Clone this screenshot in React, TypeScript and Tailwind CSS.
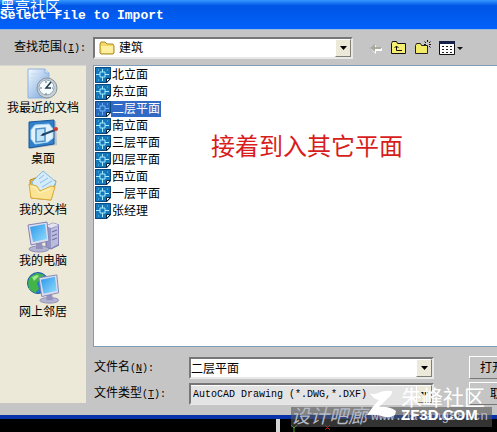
import { useState } from "react";
import type { ReactNode } from "react";

const files = [
  "北立面",
  "东立面",
  "二层平面",
  "南立面",
  "三层平面",
  "四层平面",
  "西立面",
  "一层平面",
  "张经理",
];

function RecentIcon() {
  return (
    <svg width="32" height="32" viewBox="0 0 32 32">
      <defs>
        <linearGradient id="paper" x1="0" y1="0" x2="1" y2="1">
          <stop offset="0" stopColor="#f6fbff" />
          <stop offset="1" stopColor="#6fa0dc" />
        </linearGradient>
      </defs>
      <path d="M1 1h17l4 4v25H1z" fill="url(#paper)" stroke="#8fb2dd" />
      <path d="M18 1v4h4" fill="#dcecfb" stroke="#8fb2dd" />
      <path d="M4 6h11M4 10h7M4 14h4" stroke="#c3d8f0" />
      <circle cx="20" cy="20" r="10" fill="#c9d0d7" stroke="#8794a0" />
      <circle cx="19.500" cy="19.500" r="7.500" fill="#f2fafb" stroke="#91a4b3" />
      <path d="M24 14l-5 6h5" fill="none" stroke="#26394d" strokeWidth="1.500" />
      <path d="M19 13v2M19 25v2M13 20h2M25 20h1" stroke="#5f7080" />
    </svg>
  );
}

function DesktopIcon() {
  return (
    <svg width="32" height="32" viewBox="0 0 32 32">
      <path d="M3 4l26-2 1 24-27 4z" fill="#b9c2cc" />
      <path d="M2 3l25-2v24L2 29z" fill="#2f7fca" stroke="#1a5798" />
      <path d="M8 6l14-1 4 5v9l-5 4-13 2-4-5V11z" fill="#e3f3fd" stroke="#a7d6f3" />
      <path d="M9 10l9-1v13l-9 1z" fill="#c3e3f6" stroke="#4d93ca" strokeWidth="1.500" />
      <path d="M15 16l13-5" stroke="#214b73" strokeWidth="2" />
      <path d="M13 17l4-3 1 2z" fill="#17334f" />
      <circle cx="29" cy="10" r="2" fill="#d8392a" />
    </svg>
  );
}

function DocumentsIcon() {
  return (
    <svg width="32" height="32" viewBox="0 0 32 32">
      <path d="M3 10l8-3 18 4-5 19-20-2z" fill="#e7b83e" stroke="#bd8a20" />
      <path d="M5 12L16 1l13 11-8 14-13-3z" fill="#d3ebfa" stroke="#85b8dc" />
      <path d="M12 9l5-4M13 13l8-5M15 17l10-6" stroke="#8dbee0" />
      <path d="M2 14l8 2 3 5 11-5 4 1-4 13-20-2z" fill="#fbe594" stroke="#d9ac3f" />
      <path d="M5 16l4 2 3 5 11-4" fill="none" stroke="#fff6c8" />
    </svg>
  );
}

function ScreenShape() {
  return (
    <>
      <ellipse cx="12" cy="28" rx="10" ry="3" fill="#b4b4d2" stroke="#8d8eb8" />
      <path d="M9 22h6l1 6H9z" fill="#9292bd" />
      <path d="M1 4l19-3 2 19-18 4z" fill="#dcdcee" stroke="#8384b3" />
      <path d="M3 6l15-3 2 15-14 3z" fill="url(#screen)" />
    </>
  );
}

function ComputerIcon() {
  return (
    <svg width="32" height="32" viewBox="0 0 32 32">
      <defs>
        <linearGradient id="screen" x1="0" y1="0" x2="1" y2="1">
          <stop offset="0" stopColor="#2b97eb" />
          <stop offset="1" stopColor="#93ddfb" />
        </linearGradient>
      </defs>
      <path d="M19 5l7-3 6 2v20l-8 4-5-2z" fill="#9495c2" stroke="#7475aa" />
      <path d="M19 5l5 2 8-3-6-2z" fill="#e3e3f2" />
      <path d="M24 8l7-3v18l-7 4z" fill="#bcbcdc" />
      <path d="M25 11l5-2M25 15l5-2M25 19l5-2" stroke="#6868a1" />
      <ScreenShape />
    </svg>
  );
}

function NetworkIcon() {
  return (
    <svg width="32" height="32" viewBox="0 0 32 32">
      <circle cx="11" cy="11" r="10.500" fill="#2a78d0" stroke="#205b9d" />
      <path d="M3 5l7-4 7 2-4 5-3 3 2 6-4 4-6-4-1-7z" fill="#43b548" />
      <path d="M5 5l5-2 2 1-5 5z" fill="#a4e88b" />
      <g transform="translate(11 2) scale(0.940)">
        <ScreenShape />
      </g>
    </svg>
  );
}

function DrawingIcon({ active }: { active: boolean }) {
  return (
    <svg className="shrink-0" width="16" height="16" viewBox="0 0 16 16">
      <path d="M0 0h16v12l-4 4H0z" fill={active ? "#2468c0" : "#1377ba"} />
      <path d="M.5.5h15v11l-4 4H.5z" fill="none" stroke="#0a4a80" />
      <path
        d="M1 7.500h4M10 7.500h4M7.500 2v3M7.500 10v4M5 5h5v5H5z"
        fill="none"
        stroke={active ? "#6fb4ee" : "#a6edff"}
      />
      <path d="M3 3h1M12 3h1M3 13h1" stroke="#71c9ef" />
      <path d="M11.500 15.500v-4h4z" fill="#fff" stroke="#10223a" />
    </svg>
  );
}

function FolderIcon() {
  return (
    <svg width="16" height="14" viewBox="0 0 16 14">
      <path d="M1 3l1-2h4l2 2h6l1 2v7l-1 1H2l-1-1z" fill="#f6d865" stroke="#a98928" />
      <path d="M2 5h12v6l-1 1H3z" fill="#fff0a0" />
    </svg>
  );
}

function BackIcon() {
  return (
    <svg width="14" height="12" viewBox="0 0 14 12">
      <path d="M2 7l5-4v3h6v3H7v3z" fill="#fff" />
      <path d="M1 6l5-4v3h6v2H6v3z" fill="#aaa99f" />
    </svg>
  );
}

function UpIcon() {
  return (
    <svg width="16" height="14" viewBox="0 0 16 14">
      <path d="M.5 12.500v-10l1-2h4l1 2h8v10z" fill="#f5ee70" stroke="#111" />
      <path d="M5.500 5v4.500H11M3.500 7L5.500 5l2 2" fill="none" stroke="#111" />
    </svg>
  );
}

function NewFolderIcon() {
  return (
    <svg width="16" height="15" viewBox="0 0 16 15">
      <path d="M.5 13.500v-8l1-2h4l1 2h6v8z" fill="#f2eb68" stroke="#222" />
      <path
        d="M12.500 0v2M12.500 6v2M9 4.500h2M14 4.500h2M9.500 1.500l1.500 1.500M15.500 1.500L14 3M15.500 7.500L14 6"
        stroke="#111"
      />
    </svg>
  );
}

function ViewIcon() {
  return (
    <svg width="24" height="14" viewBox="0 0 24 14">
      <path d="M.5.5h15v13H.5z" fill="#fff" stroke="#111" />
      <path d="M0 1.500h16" stroke="#15204d" strokeWidth="3" />
      <path
        d="M3 5.500h2M7 5.500h2M11 5.500h2M3 8.500h2M7 8.500h2M11 8.500h2M3 11.500h2M7 11.500h2M11 11.500h2"
        stroke="#222"
      />
      <path d="M18 6h6l-3 3z" fill="#111" />
    </svg>
  );
}

const places = [
  { label: "我最近的文档", icon: <RecentIcon /> },
  { label: "桌面", icon: <DesktopIcon /> },
  { label: "我的文档", icon: <DocumentsIcon /> },
  { label: "我的电脑", icon: <ComputerIcon /> },
  { label: "网上邻居", icon: <NetworkIcon /> },
];

function Field({ children }: { children: ReactNode }) {
  return (
    <div className="relative h-[22px] min-w-0 flex-1 border-2 border-t-[#777] border-r-[#e8e8e8] border-b-[#e8e8e8] border-l-[#777] bg-white">
      {children}
      <span className="pointer-events-none absolute top-0 right-0 flex h-full w-4 items-center justify-center border border-t-white border-r-[#817e73] border-b-[#817e73] border-l-white bg-[#ece9d8]">
        <svg width="7" height="4" viewBox="0 0 7 4">
          <path d="M0 0h7L3.500 4z" fill="#000" />
        </svg>
      </span>
    </div>
  );
}

function Label({ id, text, hotkey }: { id: string; text: string; hotkey: string }) {
  return (
    <label htmlFor={id} className="shrink-0 whitespace-nowrap">
      {text}
      <span className="font-['Liberation_Mono',monospace] text-[10px]">
        (<u>{hotkey}</u>):
      </span>
    </label>
  );
}

function App() {
  const [selected, setSelected] = useState("二层平面");

  return (
    <div className="relative min-h-screen w-full overflow-hidden bg-black font-['Liberation_Sans','Noto_Sans_CJK_SC',sans-serif] text-[12px] leading-4 text-black">
      <header className="h-[29px] bg-linear-to-b from-[#3697ff] via-[#0055e5] via-20% to-[#0262fb] pt-2">
        <h1 className="font-['Liberation_Mono',monospace] text-[13px] leading-4 font-bold whitespace-nowrap text-white">
          Select File to Import
        </h1>
      </header>

      <main className="border-t border-b-4 border-t-[#9bb8e0] border-b-[#0832a8] bg-[#c5c5c5]">
        <div className="flex h-[35px] items-center pl-[14px]">
          <div className="w-[79px] shrink-0">
            <Label id="folder" text="查找范围" hotkey="I" />
          </div>
          <Field>
            <span className="pointer-events-none absolute top-0 left-1 flex h-full items-center">
              <FolderIcon />
            </span>
            <select id="folder" className="h-full w-full appearance-none pl-6 outline-none">
              <option>建筑</option>
            </select>
          </Field>
          <div className="flex shrink-0 items-center gap-2 pr-[34px] pl-4">
            <button type="button" aria-label="后退" disabled>
              <BackIcon />
            </button>
            <button type="button" aria-label="向上一级">
              <UpIcon />
            </button>
            <button type="button" aria-label="新建文件夹">
              <NewFolderIcon />
            </button>
            <button type="button" aria-label="查看">
              <ViewIcon />
            </button>
          </div>
        </div>

        <div className="flex pb-[10px]">
          <nav className="mr-[7px] mb-[2px] flex w-[86px] shrink-0 flex-col gap-[3px] border-t border-t-[#d8d8d0] bg-[#ece9d8] pt-[2px]">
            {places.map((place) => (
              <button
                key={place.label}
                type="button"
                className="flex flex-col items-center whitespace-nowrap"
              >
                {place.icon}
                <span>{place.label}</span>
              </button>
            ))}
          </nav>

          <div className="min-w-0 flex-1">
            <ul className="h-[282px] border border-r-0 border-[#7f9db9] bg-white">
              {files.map((file) => (
                <li key={file}>
                  <button
                    type="button"
                    onClick={() => setSelected(file)}
                    className="flex h-[17px] items-center pl-px"
                  >
                    <DrawingIcon active={file === selected} />
                    <span
                      className={
                        file === selected
                          ? "bg-[#316ac5] px-px text-white"
                          : "px-px"
                      }
                    >
                      {file}
                    </span>
                  </button>
                </li>
              ))}
            </ul>

            {/* the buttons run past the right edge of the window */}
            <form className="-mr-12 flex flex-col gap-[3px] pt-[9px]">
              <div className="flex items-center">
                <div className="w-[96px] shrink-0 pl-px">
                  <Label id="name" text="文件名" hotkey="N" />
                </div>
                <Field>
                  <input
                    id="name"
                    type="text"
                    value={selected}
                    onChange={(e) => setSelected(e.target.value)}
                    className="h-full w-full outline-none"
                  />
                </Field>
                <button
                  type="button"
                  className="ml-[35px] h-[23px] w-[76px] shrink-0 border border-t-white border-r-[#777] border-b-[#777] border-l-white pl-[10px] text-left"
                >
                  打开
                </button>
              </div>
              <div className="flex items-center">
                <div className="w-[96px] shrink-0 pl-px">
                  <Label id="type" text="文件类型" hotkey="T" />
                </div>
                <Field>
                  <select
                    id="type"
                    className="h-full w-full appearance-none bg-[#e4e4e4] pl-0.5 font-['Liberation_Mono',monospace] text-[10px] outline-none"
                  >
                    <option>AutoCAD Drawing (*.DWG,*.DXF)</option>
                  </select>
                </Field>
                <button
                  type="button"
                  className="ml-[35px] h-[23px] w-[76px] shrink-0 border border-t-white border-r-[#777] border-b-[#777] border-l-white pl-5 text-left"
                >
                  取消
                </button>
              </div>
            </form>
          </div>
        </div>
      </main>

      <svg className="absolute top-[418px] left-[274px]" width="90" height="14" viewBox="0 0 90 14">
        <path d="M2 1h4v13H2z" fill="#d4d4d4" />
        <path d="M17 7l3 3 3-3M20 10v4" fill="none" stroke="#46a52b" />
        <path d="M51 7l5 5M56 7l-5 5" stroke="#c51919" />
      </svg>

      <p className="absolute top-0 left-0 text-[15px] leading-[14px] text-white">黑亮社区</p>

      <p className="absolute top-[134px] left-[211px] text-[24px] leading-[26px] whitespace-nowrap text-[#d91c1c]">
        接着到入其它平面
      </p>

      <div className="absolute top-[407px] left-[291px] flex h-5 items-center gap-1 bg-[#555]/60 pr-1 whitespace-nowrap text-[#b4bac6]">
        <span className="text-[19px] italic">设计吧廊</span>
        <span className="font-['Liberation_Mono',monospace] text-[13px]">www.balang88.cn</span>
      </div>

      <div className="absolute top-[387px] left-[365px] flex text-white">
        <svg width="36" height="36" viewBox="0 0 36 36">
          <path
            d="M5 6q3 2 8 0 6-3 14-2 1 3-4 7l-9 9q10-1 17 4l-1 4q-5 3-10 2-8-3-18-2 5-8 12-15-6-1-9-7z"
            fill="#fff"
          />
        </svg>
        <div className="whitespace-nowrap">
          <p className="text-[21px] leading-[22px]">朱峰社区</p>
          <p className="text-[15px] leading-3 font-bold">ZF3D.COM</p>
        </div>
      </div>
    </div>
  );
}

export default App;
